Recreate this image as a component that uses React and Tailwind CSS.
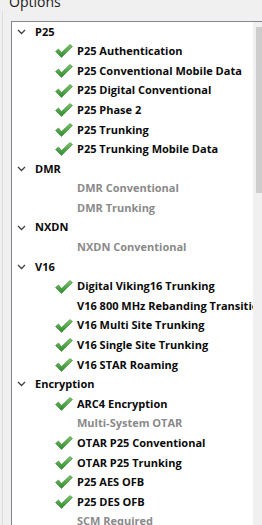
import React from 'react';

const groups = [
  {
    name: 'P25',
    items: [
      ['P25 Authentication', true],
      ['P25 Conventional Mobile Data', true],
      ['P25 Digital Conventional', true],
      ['P25 Phase 2', true],
      ['P25 Trunking', true],
      ['P25 Trunking Mobile Data', true],
    ],
  },
  {
    name: 'DMR',
    items: [
      ['DMR Conventional', false],
      ['DMR Trunking', false],
    ],
  },
  {
    name: 'NXDN',
    items: [['NXDN Conventional', false]],
  },
  {
    name: 'V16',
    items: [
      ['Digital Viking16 Trunking', true],
      ['V16 800 MHz Rebanding Transition', 'plain'],
      ['V16 Multi Site Trunking', true],
      ['V16 Single Site Trunking', true],
      ['V16 STAR Roaming', true],
    ],
  },
  {
    name: 'Encryption',
    items: [
      ['ARC4 Encryption', true],
      ['Multi-System OTAR', false],
      ['OTAR P25 Conventional', true],
      ['OTAR P25 Trunking', true],
      ['P25 AES OFB', true],
      ['P25 DES OFB', true],
      ['SCM Required', false],
    ],
  },
];

const Check = () => (
  <svg width="18" height="14" viewBox="0 0 18 14">
    <defs>
      <linearGradient id="chk" x1="0" y1="0" x2="0" y2="1">
        <stop offset="0" stopColor="#7cc26a" />
        <stop offset="1" stopColor="#2f8a2f" />
      </linearGradient>
    </defs>
    <path d="M0.5 7.5 L3.5 5 L6.5 8.5 L15 0.5 L17.5 2.5 L6.5 13.5 Z" fill="url(#chk)" stroke="#3a8e34" strokeWidth="0.6" strokeLinejoin="round" />
  </svg>
);

const Chevron = () => (
  <svg width="9" height="6" viewBox="0 0 9 6">
    <path d="M1 1 L4.5 4.5 L8 1" fill="none" stroke="#404040" strokeWidth="1.3" />
  </svg>
);

export default function App() {
  return (
    <div className="w-[262px] h-[525px] overflow-hidden bg-[#f0f0f0] relative" style={{ fontFamily: '"Open Sans", "Noto Sans", sans-serif' }}>
      {/* group box caption */}
      <div className="h-[21px] relative">
        <span className="absolute left-[9px] top-[-8px] text-[14px] text-[#1a1a1a] leading-[20px]">Options</span>
        <div className="absolute left-[2px] top-[11px] bottom-0 w-px bg-[#dcdcdc]" />
      </div>
      <div className="flex h-[504px]">
        <div className="w-[11px] shrink-0 relative">
          <div className="absolute left-[2px] top-0 bottom-0 w-px bg-[#dcdcdc]" />
        </div>
        <div className="flex-1 border-l border-t border-[#828790] bg-white flex min-w-0">
          <div className="flex-1 min-w-0 overflow-hidden">
            {groups.map((g) => (
              <div key={g.name}>
                <div className="h-[19.6px] flex items-center">
                  <div className="w-[23px] pl-[5px] flex items-center"><Chevron /></div>
                  <span className="text-[11px] font-bold text-[#0a0a0a]">{g.name}</span>
                </div>
                {g.items.map(([label, state]) => (
                  <div key={label} className="h-[19.6px] flex items-center whitespace-nowrap">
                    <div className="w-[65px] shrink-0 pl-[43px] flex items-center">
                      {state === true && <Check />}
                    </div>
                    <span className={`text-[11px] font-bold ${state === false ? 'text-[#8a8a8a]' : 'text-[#0a0a0a]'}`}>{label}</span>
                  </div>
                ))}
              </div>
            ))}
          </div>
          <div className="w-[9px] shrink-0 bg-[#f0f0f0] pt-[5px] pl-[3px]">
            <div className="h-[166px] bg-[#cdcdcd]" />
          </div>
        </div>
      </div>
    </div>
  );
}
